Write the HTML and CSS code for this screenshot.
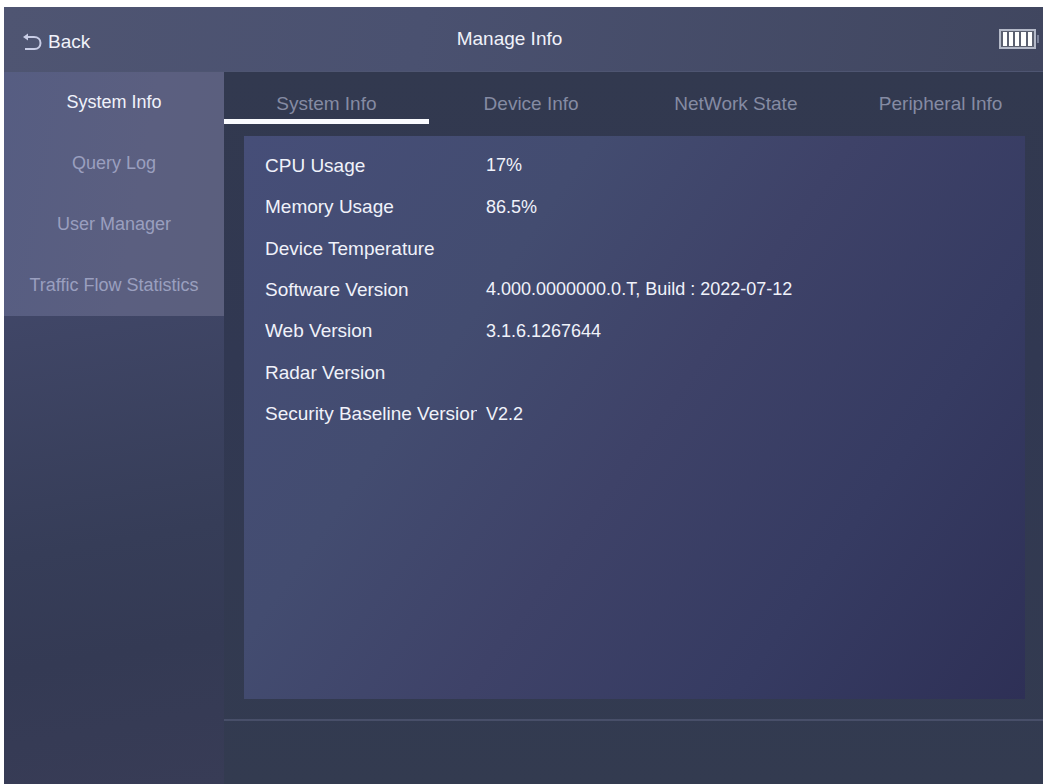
FILE: index.html
```
<!doctype html>
<html lang="en">
<head>
<meta charset="utf-8">
<title>Manage Info</title>
<link rel="stylesheet" href="styles.css">
</head>

<body>
<div class="screen">
	<header class="header">
		<button type="button" class="back">
			<svg width="19" height="18" viewBox="0 0 19 18" fill="none" stroke="currentColor" stroke-width="2">
				<path d="M2 4h9c4 0 6.500 2.500 6.500 6s-2.500 6-6 6H2" />
				<path d="M0 4l5-3.500v7z" fill="currentColor" stroke="none" />
			</svg>
			Back
		</button>
		<h1 class="title">Manage Info</h1>
		<svg class="battery" width="42" height="20" viewBox="0 0 42 20">
			<rect x="1" y="1" width="35" height="18" fill="#5b6070" stroke="#b4b9c8" stroke-width="2" />
			<path d="M4 3h4v14H4zM10 3h4v14h-4zM16 3h4v14h-4zM22 3h5v14h-5zM29 3h4v14h-4z" fill="#fff" />
			<path d="M39 6v8" stroke="#7a8199" stroke-width="2" />
		</svg>
	</header>

	<div class="main">
		<nav class="side">
			<ul class="menu">
				<li><a href="#" class="active">System Info</a></li>
				<li><a href="#">Query Log</a></li>
				<li><a href="#">User Manager</a></li>
				<li><a href="#">Traffic Flow Statistics</a></li>
			</ul>
		</nav>

		<div class="content">
			<div class="tabs" role="tablist">
				<button type="button" role="tab" class="tab active" aria-selected="true">System Info</button>
				<button type="button" role="tab" class="tab" aria-selected="false">Device Info</button>
				<button type="button" role="tab" class="tab" aria-selected="false">NetWork State</button>
				<button type="button" role="tab" class="tab" aria-selected="false">Peripheral Info</button>
			</div>

			<section class="panel">
				<dl class="info">
					<dt>CPU Usage</dt><dd>17%</dd>
					<dt>Memory Usage</dt><dd>86.5%</dd>
					<dt>Device Temperature</dt><dd></dd>
					<dt>Software Version</dt><dd>4.000.0000000.0.T, Build : 2022-07-12</dd>
					<dt>Web Version</dt><dd>3.1.6.1267644</dd>
					<dt>Radar Version</dt><dd></dd>
					<dt>Security Baseline Version</dt><dd>V2.2</dd>
				</dl>
			</section>

			<footer class="footer"></footer>
		</div>
	</div>
</div>
</body>
</html>
```

FILE: styles.css
```
*{ margin:0; padding:0; box-sizing:border-box;}
body{ background:#fff; color:#f0f2fa; font-family:"Liberation Sans", Arial, sans-serif; font-size:19px;}
button{ background:none; border:none; color:inherit; font:inherit; cursor:pointer;}
a{ color:inherit; text-decoration:none;}
ul{ list-style:none;}

.screen{ display:flex; flex-direction:column; min-height:100vh; padding:7px 2px 0 4px;}

/* header */
.header{ display:grid; grid-template-columns:1fr auto; align-items:center; height:65px; padding:0 2px 0 16px; background:linear-gradient(100deg, #4f5572, #4a5170 40%, #40465f); border-bottom:1px solid #4e5571;}
.back{ grid-area:1 / 1; justify-self:start; display:flex; align-items:center; gap:6px; padding:6px 3px 0;}
.back svg{ color:#c9cde6;}
.title{ grid-area:1 / 1; justify-self:center; font-size:19px; font-weight:normal;}
.battery{ grid-area:1 / 2;}

.main{ flex:1; display:flex;}

/* left menu */
.side{ width:220px; background:linear-gradient(170deg, #414768 30%, #363d58 65%, #343a54 80%, #383c56);}
.menu{ background:linear-gradient(100deg, #565d82, #5b5f80 60%, #5b5f7d); color:#9a9fbf; font-size:18px;}
.menu a{ display:block; line-height:61px; text-align:center;}
.menu .active{ color:#f0f2fa;}

/* right side */
.content{ flex:1; display:flex; flex-direction:column; background:linear-gradient(#32394f, #313852 40%, #333b50);}
.tabs{ display:grid; grid-template-columns:repeat(4, 1fr);}
.tab{ height:52px; padding-top:16px; border-bottom:5px solid transparent; color:#858ba3;}
.tab.active{ border-color:#fafbff;}

.panel{ flex:1; margin:12px 18px 20px 20px; padding:9px 21px; background:linear-gradient(125deg, #464e78, #434c70 30%, #3e4268 52%, #363b62 75%, #2e3056);}
.info{ display:grid; grid-template-columns:212px 1fr; grid-auto-rows:1fr; column-gap:9px; align-items:center; min-height:290px;}
.info dt{ overflow:hidden; white-space:nowrap;}
.info dd{ font-size:18px;}

.footer{ height:65px; border-top:2px solid #484f69;}
```
